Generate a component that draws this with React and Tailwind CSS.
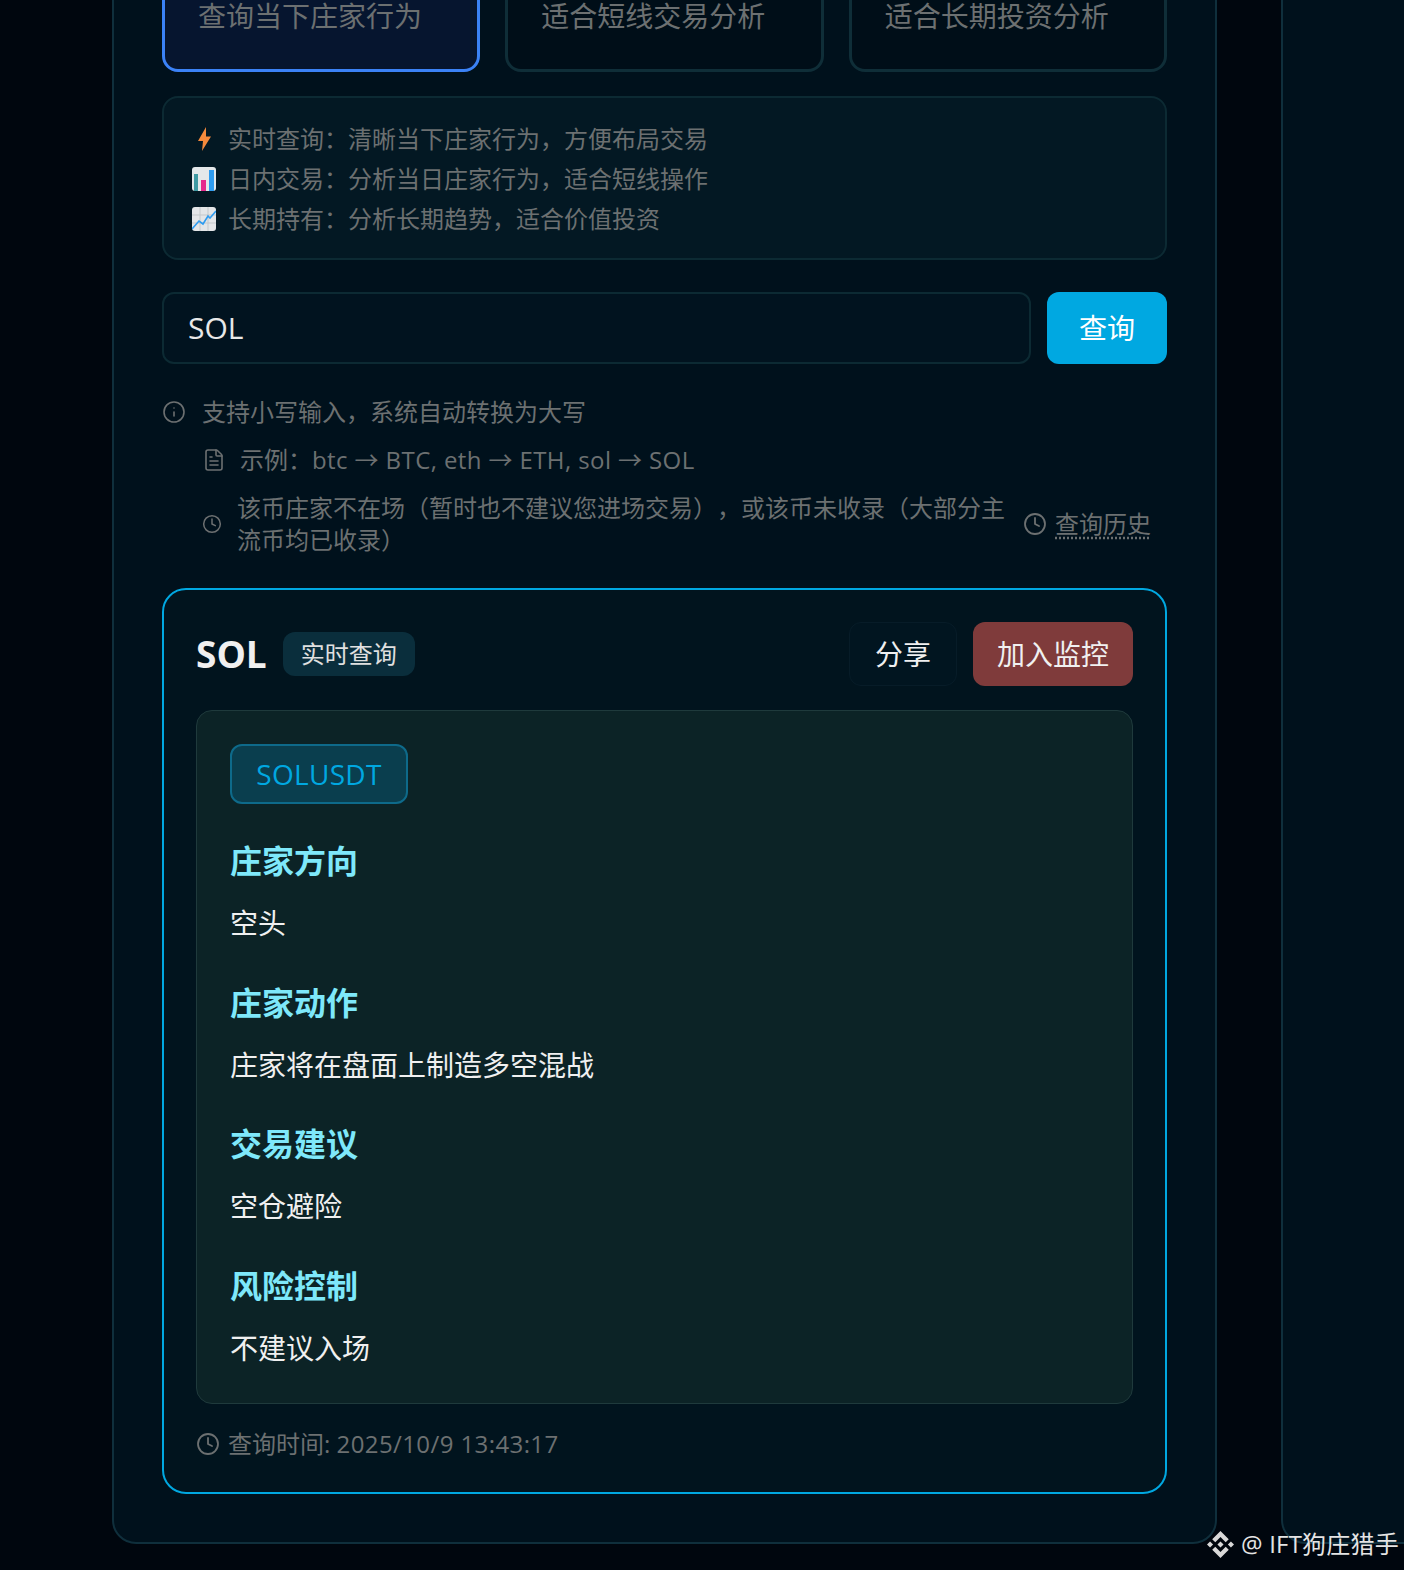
import { Clock, FileText, Info } from 'lucide-react'

const tabs = [
  { label: '查询当下庄家行为', active: true },
  { label: '适合短线交易分析', active: false },
  { label: '适合长期投资分析', active: false },
]

const sections = [
  { title: '庄家方向', text: '空头' },
  { title: '庄家动作', text: '庄家将在盘面上制造多空混战' },
  { title: '交易建议', text: '空仓避险' },
  { title: '风险控制', text: '不建议入场' },
]

// full-width punctuation
const colon = '\uFF1A'
const comma = '\uFF0C'
const open = '\uFF08'
const close = '\uFF09'

function Bolt() {
  return (
    <svg viewBox="0 0 16 24" className="w-[16px] h-[24px]">
      <path d="M10 0 2 14h5L6 24l9-14.5h-5z" fill="#f58a3c" />
    </svg>
  )
}

function BarsEmoji() {
  return (
    <svg viewBox="0 0 24 24" className="w-[24px] h-[24px]">
      <rect width="24" height="24" rx="3" fill="#e4e8ea" />
      <rect x="2" y="7" width="4" height="17" fill="#3f9aa3" />
      <rect x="9" y="13" width="5" height="11" fill="#e6288c" />
      <rect x="17" y="3" width="5" height="21" fill="#2f9cf0" />
    </svg>
  )
}

function LineEmoji() {
  return (
    <svg viewBox="0 0 24 24" className="w-[24px] h-[24px]">
      <rect width="24" height="24" rx="3" fill="#e4e6e8" />
      <path d="M0 8h24M0 16h24M8 0v24M16 0v24" stroke="#c4c8cb" strokeWidth="1" />
      <path d="M0 22 7 14l4 3 5-8 2 2 6-7" fill="none" stroke="#2f9cf0" strokeWidth="1.6" />
    </svg>
  )
}

function BinanceLogo() {
  return (
    <svg viewBox="0 0 24 24" className="w-[27px] h-[27px]" fill="#d9d9d9">
      <path d="M16.624 13.9202l2.7175 2.7154-7.353 7.353-7.353-7.352 2.7175-2.7164 4.6355 4.6595 4.6356-4.6595zm4.6366-4.6366L24 12l-2.7154 2.7164L18.5682 12l2.6924-2.7164zm-9.272.001l2.7163 2.6914-2.7164 2.7174v-.001L9.2721 12l2.7164-2.7154zm-9.2722-.001L5.4088 12l-2.6914 2.6924L0 12l2.7164-2.7164zM11.9885.0115l7.353 7.329-2.7174 2.7154-4.6356-4.6356-4.6355 4.6595-2.7174-2.7154 7.353-7.353z" />
    </svg>
  )
}

export default function App() {
  return (
    <div className="relative h-[1570px] overflow-hidden bg-[#00060e] font-['Open_Sans','Noto_Sans_CJK_SC',sans-serif] text-[#6c7071]">
      <div className="flex items-start pl-[112px]">
        <main className="w-[1105px] shrink-0 -mt-[100px] h-[1644px] rounded-b-[24px] border-2 border-[#0f2f3c] bg-[#00111c] p-[48px]">
          <div className="grid grid-cols-3 gap-[25px]">
            {tabs.map((tab) => (
              <div
                key={tab.label}
                className={
                  tab.active
                    ? 'h-[122px] rounded-[16px] border-[3px] border-[#3b82f6] bg-[#06152f] pt-[43px] pl-[33px] text-[28px] leading-[40px]'
                    : 'h-[122px] rounded-[16px] border-[3px] border-[#0f2e38] bg-[#000e18] pt-[43px] pl-[33px] text-[28px] leading-[40px]'
                }
              >
                {tab.label}
              </div>
            ))}
          </div>

          <div className="mt-[24px] rounded-[16px] border-2 border-[#0c2a33] bg-[#031823] px-[28px] pt-[21px] pb-[19px] text-[24px] leading-[40px]">
            <div className="flex items-center">
              <span className="w-[24px] flex justify-center"><Bolt /></span>
              <span className="ml-[12px]">实时查询{colon}清晰当下庄家行为{comma}方便布局交易</span>
            </div>
            <div className="flex items-center">
              <BarsEmoji />
              <span className="ml-[12px]">日内交易{colon}分析当日庄家行为{comma}适合短线操作</span>
            </div>
            <div className="flex items-center">
              <LineEmoji />
              <span className="ml-[12px]">长期持有{colon}分析长期趋势{comma}适合价值投资</span>
            </div>
          </div>

          <div className="mt-[32px] flex gap-[16px]">
            <div className="flex-1 h-[72px] flex items-center rounded-[12px] border-2 border-[#0c2a33] bg-[#01131f] pl-[24px] pb-[2px] text-[30px] text-[#e8e8e8]">
              SOL
            </div>
            <button className="w-[120px] h-[72px] rounded-[12px] bg-[#00a8e1] text-[28px] text-white">查询</button>
          </div>

          <div className="mt-[32px] flex items-center h-[32px] text-[24px] leading-[32px]">
            <Info size={24} strokeWidth={1.6} />
            <span className="ml-[16px]">支持小写输入{comma}系统自动转换为大写</span>
          </div>
          <div className="mt-[16px] ml-[40px] flex items-center h-[32px] text-[24px] leading-[32px]">
            <FileText size={24} strokeWidth={1.6} />
            <span className="ml-[14px]">示例{colon}<span className="tracking-[0.4px]">btc → BTC, eth → ETH, sol → SOL</span></span>
          </div>
          <div className="mt-[16px] ml-[40px] flex items-center text-[24px] leading-[32px]">
            <Clock size={20} strokeWidth={1.8} className="shrink-0" />
            <span className="ml-[15px] w-[769px] shrink-0 [text-spacing-trim:space-all]">该币庄家不在场{open}暂时也不建议您进场交易{close}{comma}或该币未收录{open}大部分主流币均已收录{close}</span>
            <Clock size={24} strokeWidth={1.8} className="ml-[17px] shrink-0" />
            <span className="ml-[8px] underline decoration-dotted underline-offset-4">查询历史</span>
          </div>

          <section className="mt-[32px] rounded-[24px] border-2 border-[#00a8e1] bg-[#01141e] p-[32px]">
            <div className="flex items-center justify-between">
              <div className="flex items-center gap-[16px]">
                <h2 className="text-[37px] leading-[48px] font-bold text-[#f0f0f0]">SOL</h2>
                <span className="h-[44px] flex items-center rounded-[12px] bg-[#0a2e3c] px-[18px] text-[24px] text-[#e0e0e0]">实时查询</span>
              </div>
              <div className="flex gap-[16px]">
                <button className="w-[108px] h-[64px] rounded-[12px] border border-[#071c28] bg-[#011520] text-[28px] text-[#f0f0f0]">分享</button>
                <button className="w-[160px] h-[64px] rounded-[12px] bg-[#7f3b3b] text-[28px] text-[#f0f0f0]">加入监控</button>
              </div>
            </div>

            <div className="mt-[24px] rounded-[16px] border border-[#1f3a3c] bg-[#0c2326] pt-[33px] pl-[33px] pr-[32px] pb-[33px]">
              <span className="flex items-center justify-center w-[178px] h-[60px] rounded-[12px] border-2 border-[#0e6a8a] bg-[#0a3e4e] text-[28px] tracking-[0.3px] text-[#00a8e1]">SOLUSDT</span>
              {sections.map((s) => (
                <div key={s.title} className="mt-[33.4px]">
                  <h3 className="text-[32px] leading-[48px] font-bold text-[#7ee8fa]">{s.title}</h3>
                  <p className="mt-[16px] text-[28px] leading-[44px] text-[#f0f0f0]">{s.text}</p>
                </div>
              ))}
            </div>

            <div className="mt-[24px] flex items-center h-[32px] text-[24px]">
              <Clock size={24} strokeWidth={1.8} />
              <span className="ml-[8px]">查询时间: <span className="tracking-[0.4px]">2025/10/9 13:43:17</span></span>
            </div>
          </section>
        </main>

        <aside className="ml-[64px] flex-1 -mt-[100px] h-[1644px] rounded-bl-[24px] border-l-2 border-b-2 border-[#0f2f3c] bg-[#00111c]" />
      </div>

      <div className="absolute left-[1207px] top-[1530px] flex items-center whitespace-nowrap text-[24px] leading-[28px] tracking-[0.2px] text-[#e4e4e4]">
        <BinanceLogo />
        <span className="ml-[7px]">@ IFT狗庄猎手</span>
      </div>
    </div>
  )
}
